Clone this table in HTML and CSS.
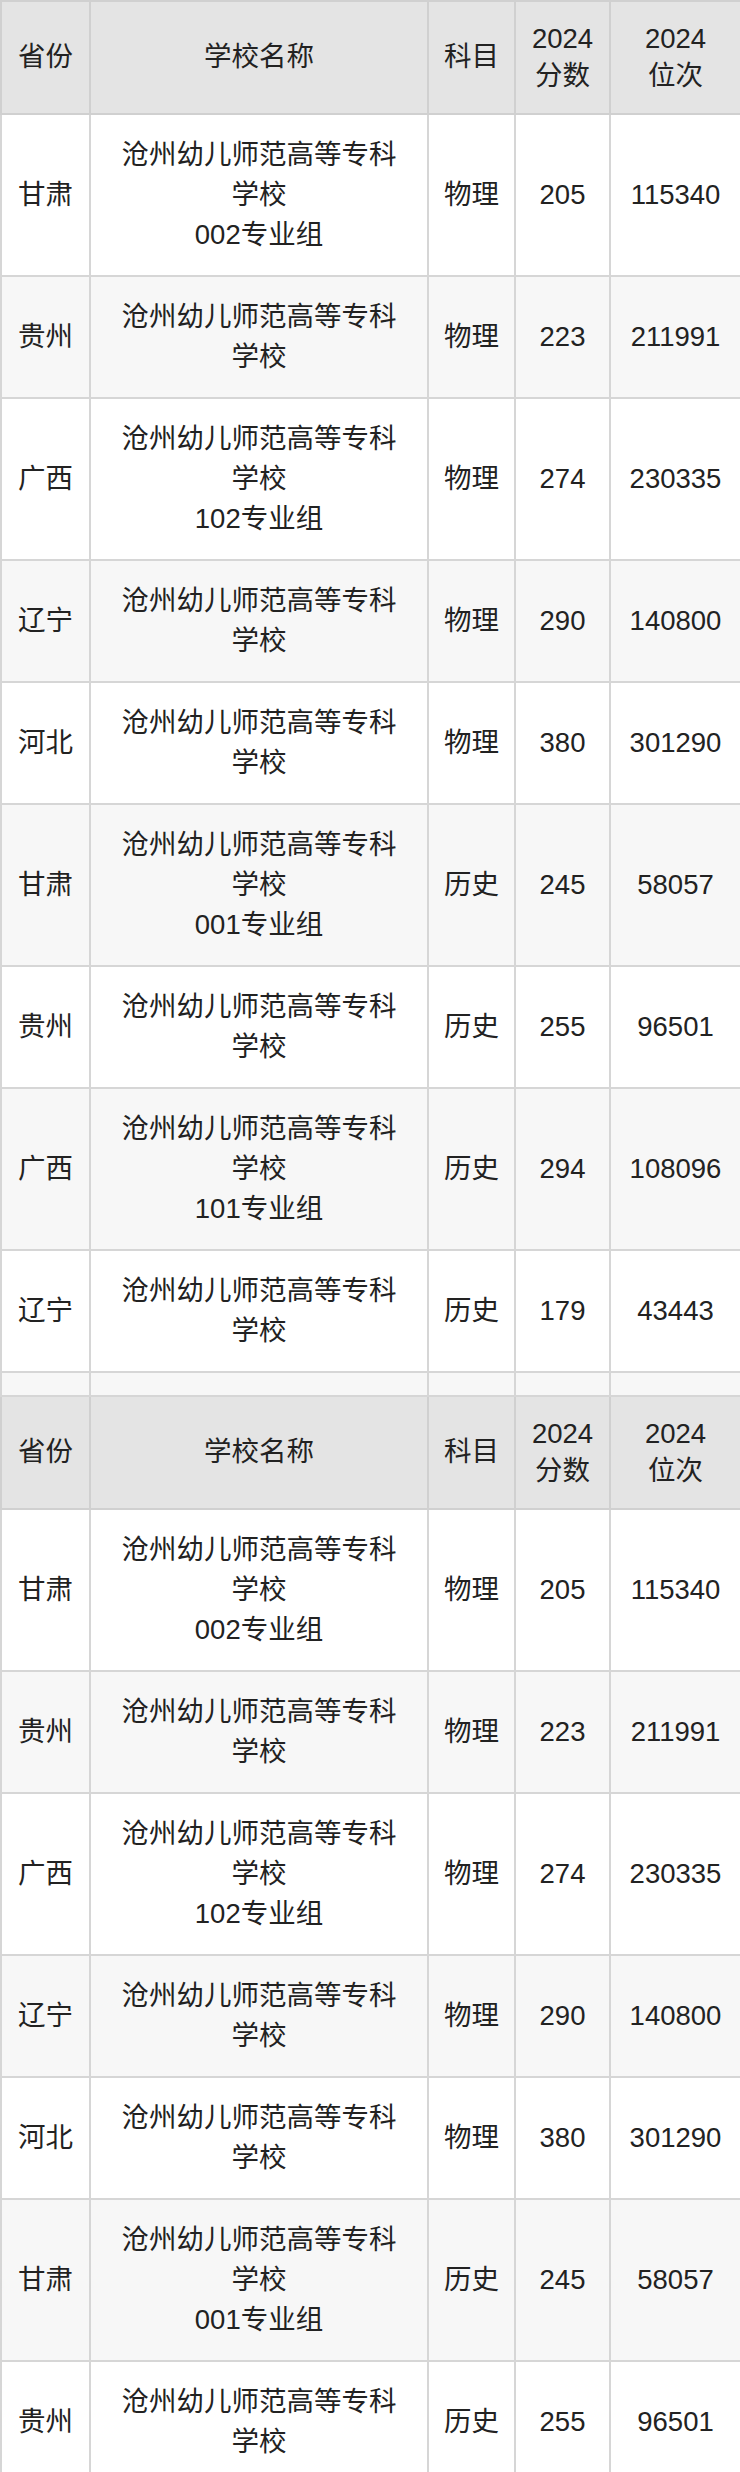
FILE: index.html
```html
<!DOCTYPE html>
<html lang="zh-CN">
<head>
<meta charset="utf-8">
<title>沧州幼儿师范高等专科学校 2024 分数线</title>
<link rel="stylesheet" href="styles.css">
</head>
<body>
<table class="score-table">
  <colgroup>
    <col class="c-prov">
    <col class="c-school">
    <col class="c-subj">
    <col class="c-score">
    <col class="c-rank">
  </colgroup>
  <tbody>
    <tr class="head">
      <td>省份</td><td>学校名称</td><td>科目</td><td>2024<br>分数</td><td>2024<br>位次</td>
    </tr>
    <tr><td>甘肃</td><td>沧州幼儿师范高等专科<br>学校<br>002专业组</td><td>物理</td><td>205</td><td>115340</td></tr>
    <tr class="alt"><td>贵州</td><td>沧州幼儿师范高等专科<br>学校</td><td>物理</td><td>223</td><td>211991</td></tr>
    <tr><td>广西</td><td>沧州幼儿师范高等专科<br>学校<br>102专业组</td><td>物理</td><td>274</td><td>230335</td></tr>
    <tr class="alt"><td>辽宁</td><td>沧州幼儿师范高等专科<br>学校</td><td>物理</td><td>290</td><td>140800</td></tr>
    <tr><td>河北</td><td>沧州幼儿师范高等专科<br>学校</td><td>物理</td><td>380</td><td>301290</td></tr>
    <tr class="alt"><td>甘肃</td><td>沧州幼儿师范高等专科<br>学校<br>001专业组</td><td>历史</td><td>245</td><td>58057</td></tr>
    <tr><td>贵州</td><td>沧州幼儿师范高等专科<br>学校</td><td>历史</td><td>255</td><td>96501</td></tr>
    <tr class="alt"><td>广西</td><td>沧州幼儿师范高等专科<br>学校<br>101专业组</td><td>历史</td><td>294</td><td>108096</td></tr>
    <tr><td>辽宁</td><td>沧州幼儿师范高等专科<br>学校</td><td>历史</td><td>179</td><td>43443</td></tr>
    <tr class="alt spacer"><td></td><td></td><td></td><td></td><td></td></tr>
    <tr class="head">
      <td>省份</td><td>学校名称</td><td>科目</td><td>2024<br>分数</td><td>2024<br>位次</td>
    </tr>
    <tr><td>甘肃</td><td>沧州幼儿师范高等专科<br>学校<br>002专业组</td><td>物理</td><td>205</td><td>115340</td></tr>
    <tr class="alt"><td>贵州</td><td>沧州幼儿师范高等专科<br>学校</td><td>物理</td><td>223</td><td>211991</td></tr>
    <tr><td>广西</td><td>沧州幼儿师范高等专科<br>学校<br>102专业组</td><td>物理</td><td>274</td><td>230335</td></tr>
    <tr class="alt"><td>辽宁</td><td>沧州幼儿师范高等专科<br>学校</td><td>物理</td><td>290</td><td>140800</td></tr>
    <tr><td>河北</td><td>沧州幼儿师范高等专科<br>学校</td><td>物理</td><td>380</td><td>301290</td></tr>
    <tr class="alt"><td>甘肃</td><td>沧州幼儿师范高等专科<br>学校<br>001专业组</td><td>历史</td><td>245</td><td>58057</td></tr>
    <tr><td>贵州</td><td>沧州幼儿师范高等专科<br>学校</td><td>历史</td><td>255</td><td>96501</td></tr>
  </tbody>
</table>
</body>
</html>
```
FILE: styles.css
```css
html, body {
  margin: 0;
  padding: 0;
  background: #ffffff;
}

body {
  font-family: "Liberation Sans", "Noto Sans CJK SC", sans-serif;
  color: #222222;
}

.score-table {
  width: 740px;
  border-collapse: collapse;
  table-layout: fixed;
  font-size: 27.5px;
}

.c-prov { width: 89px; }
.c-school { width: 338px; }
.c-subj { width: 87px; }
.c-score { width: 95px; }
.c-rank { width: 131px; }

.score-table td {
  border: 2px solid #d6d6d6;
  padding: 20px 4px;
  line-height: 40px;
  text-align: center;
  vertical-align: middle;
  background: #ffffff;
}

.score-table tr.alt td {
  background: #f7f7f7;
}

.score-table tr.head td {
  background: #e4e4e4;
  border-color: #d0d0d0;
  padding: 19px 4px;
  line-height: 36.5px;
}

.score-table tr.spacer td {
  padding: 0;
  height: 22px;
  line-height: 0;
}
```
